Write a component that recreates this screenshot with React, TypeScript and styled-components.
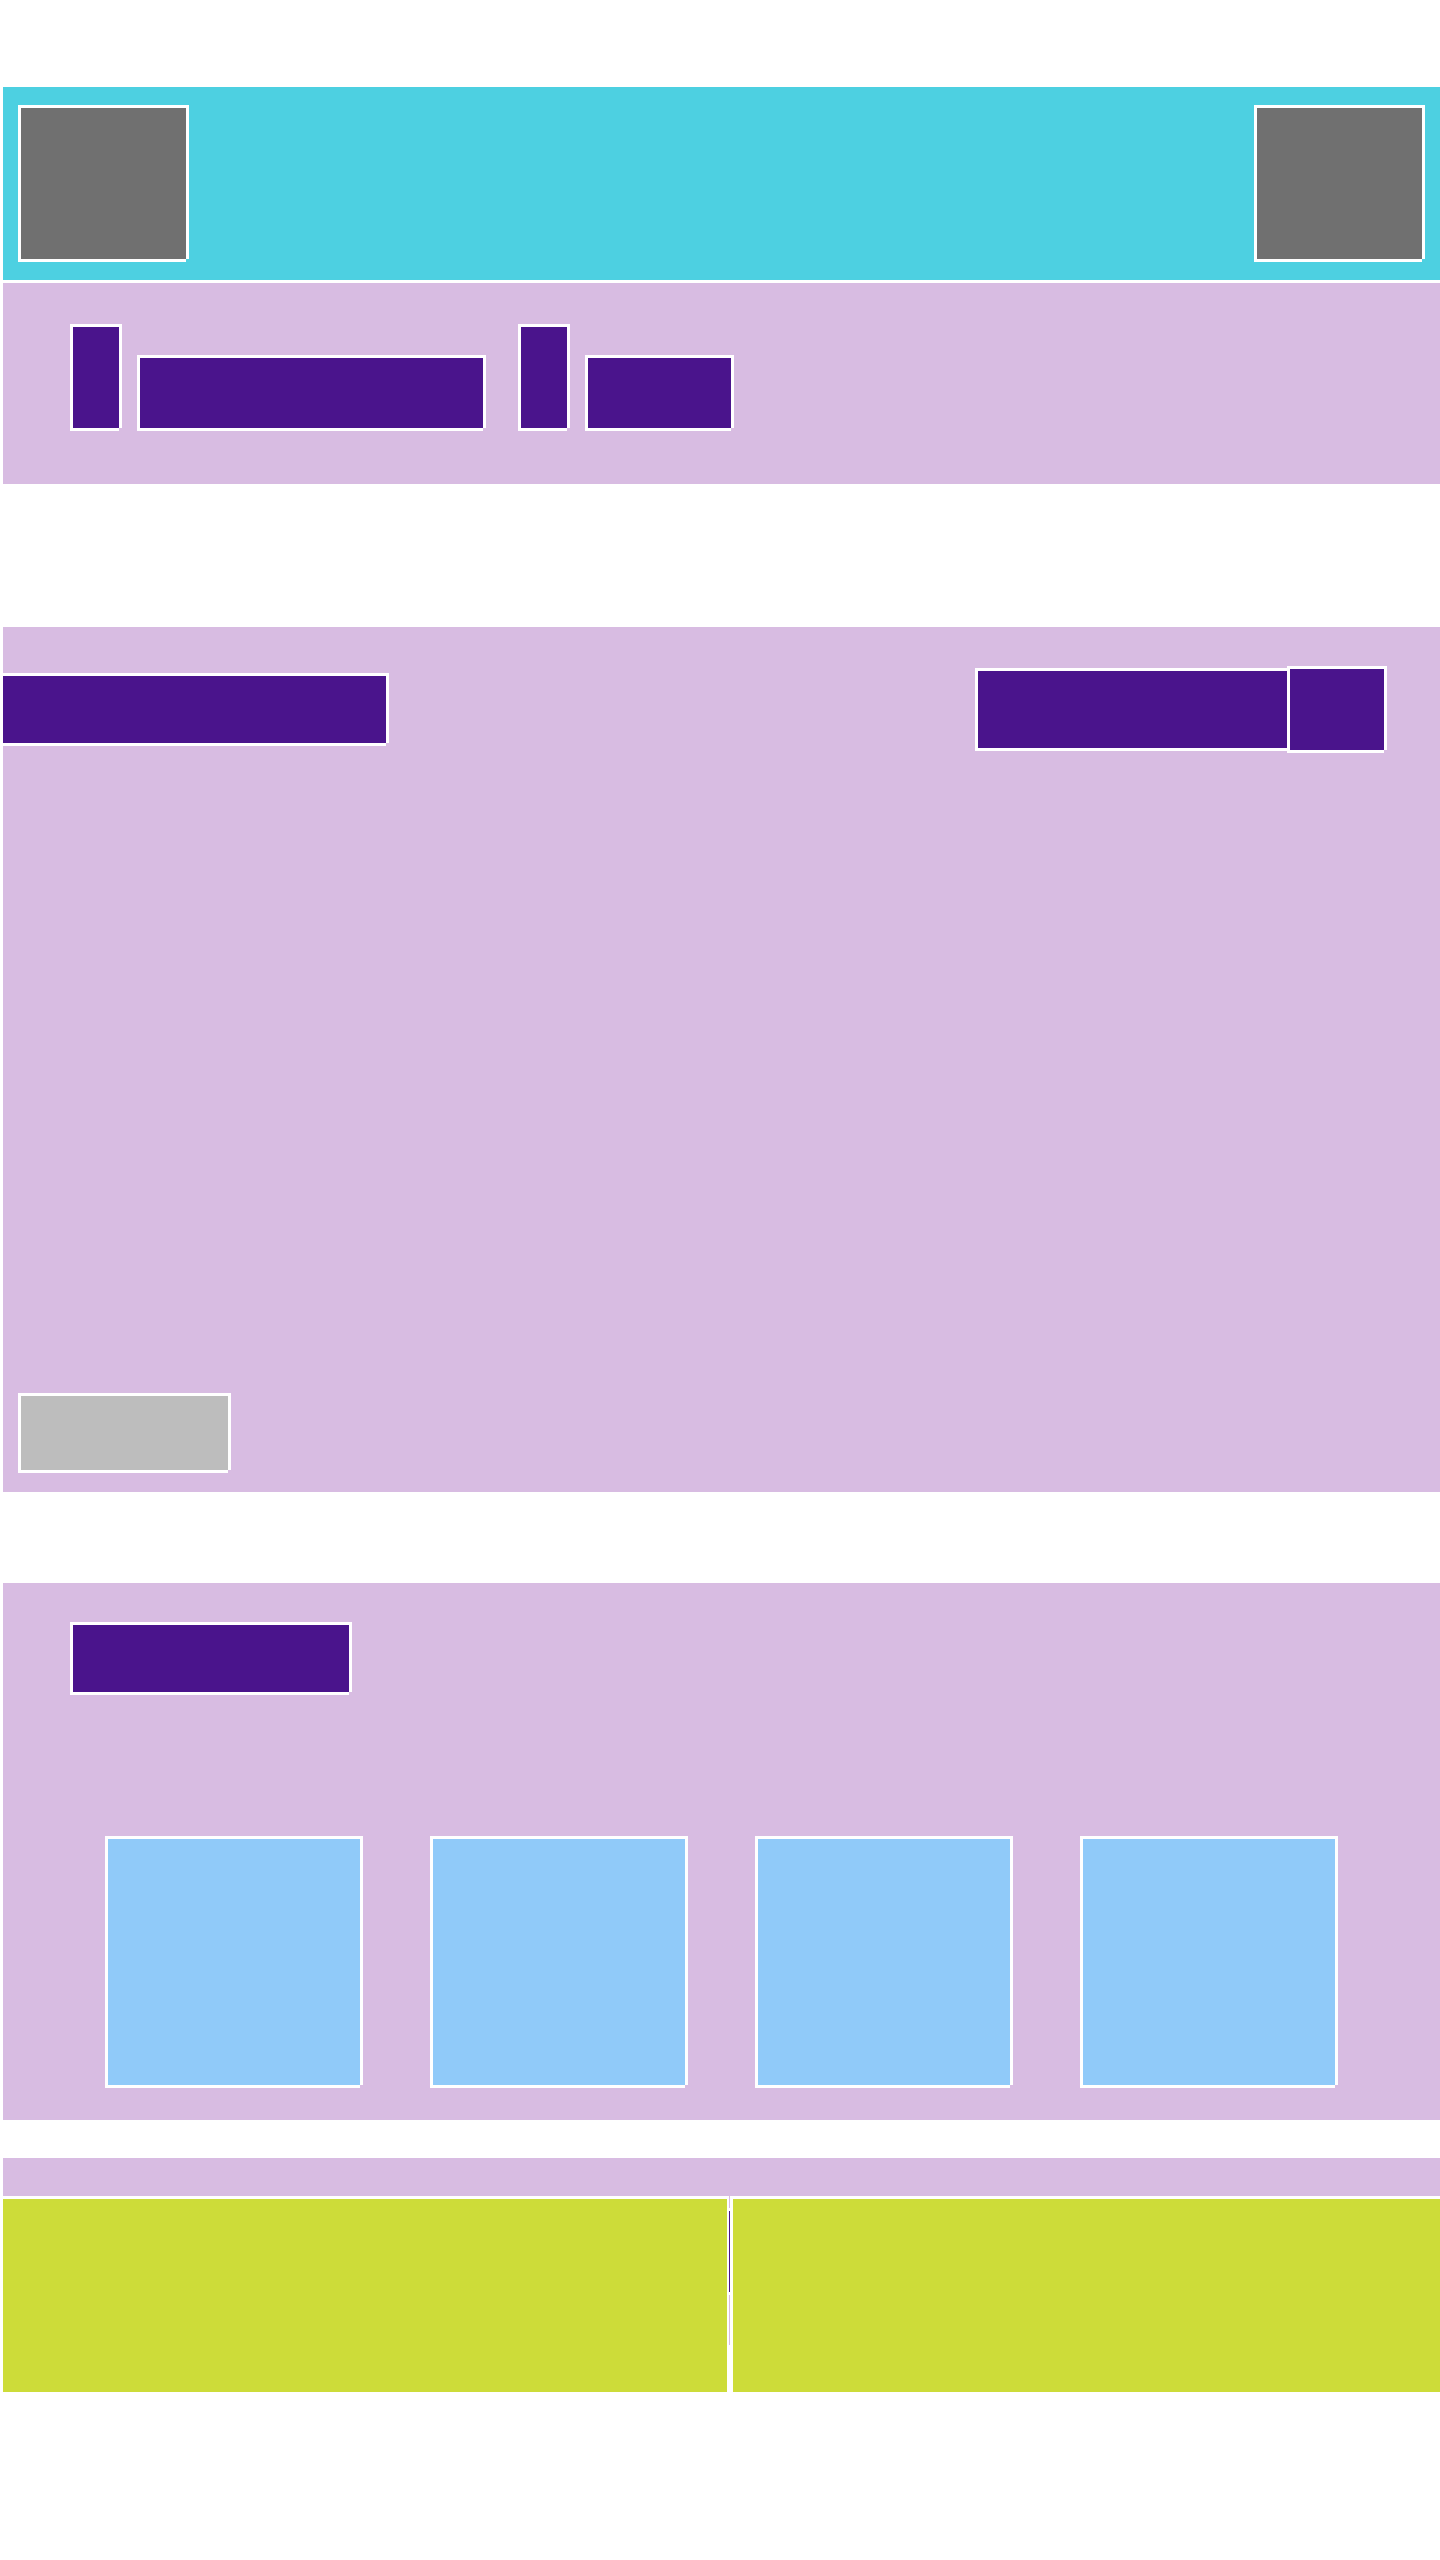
import styled, { createGlobalStyle, css } from "styled-components";

const colors = {
  white: "#ffffff",
  cyan: "#4dd0e1",
  lavender: "#d8bce2",
  purple: "#4a148c",
  gray: "#707070",
  lightGray: "#bdbdbd",
  sky: "#90caf9",
  lime: "#cddc39",
};

const GlobalStyle = createGlobalStyle`
  html, body {
    margin: 0;
    padding: 0;
    background: ${colors.white};
    font-family: "Liberation Sans", Arial, sans-serif;
  }
`;

// white frame on top/left, drawn as an offset shadow on right/bottom
const frame = css`
  box-sizing: border-box;
  border-top: 3px solid ${colors.white};
  border-left: 3px solid ${colors.white};
  box-shadow: 3px 0 0 ${colors.white}, 0 3px 0 ${colors.white};
`;

type BoxProps = { $w: number; $h: number };

const Page = styled.div`
  width: 1440px;
  padding-top: 84px;
  padding-bottom: 168px;
`;

const Header = styled.header`
  ${frame};
  width: 100%;
  background: ${colors.cyan};
  display: flex;
  justify-content: space-between;
  align-items: flex-start;
  padding: 18px 18px 21px 15px;
`;

const Logo = styled.div`
  ${frame};
  flex: none;
  width: 168px;
  height: 154px;
  background: ${colors.gray};
`;

const Nav = styled.nav`
  ${frame};
  width: 100%;
  background: ${colors.lavender};
  display: flex;
  align-items: flex-end;
  gap: 35px;
  padding: 41px 0 56px 67px;
`;

const NavGroup = styled.div`
  display: flex;
  align-items: flex-end;
  gap: 18px;
`;

const NavItem = styled.div<BoxProps>`
  ${frame};
  flex: none;
  width: ${(p) => p.$w}px;
  height: ${(p) => p.$h}px;
  background: ${colors.purple};
`;

const Main = styled.main`
  ${frame};
  width: 100%;
  height: 868px;
  margin-top: 140px;
  background: ${colors.lavender};
  display: flex;
  flex-direction: column;
  justify-content: space-between;
  padding: 39px 56px 22px 0;
`;

const TopRow = styled.div`
  display: flex;
  align-items: center;
  justify-content: space-between;
`;

const Title = styled.div<BoxProps & { $indent?: number }>`
  ${frame};
  flex: none;
  width: ${(p) => p.$w}px;
  height: ${(p) => p.$h}px;
  margin-left: ${(p) => p.$indent ?? 0}px;
  background: ${colors.purple};
`;

const Actions = styled.div`
  display: flex;
  align-items: center;
`;

const ActionButton = styled.div<BoxProps>`
  ${frame};
  flex: none;
  width: ${(p) => p.$w}px;
  height: ${(p) => p.$h}px;
  background: ${colors.purple};
`;

const GhostButton = styled.div`
  ${frame};
  width: 210px;
  height: 77px;
  margin-left: 15px;
  background: ${colors.lightGray};
`;

const Categories = styled.section`
  ${frame};
  width: 100%;
  margin-top: 88px;
  background: ${colors.lavender};
  padding: 39px 0 35px 67px;
`;

const CardRow = styled.div`
  display: flex;
  gap: 70px;
  margin-top: 144px;
  padding-left: 35px;
`;

const Card = styled.div`
  ${frame};
  flex: none;
  width: 255px;
  height: 249px;
  background: ${colors.sky};
`;

const Footer = styled.footer`
  margin-top: 35px;
`;

const FooterBar = styled.div`
  ${frame};
  width: 100%;
  height: 41px;
  background: ${colors.lavender};
`;

const Panels = styled.div`
  display: flex;
`;

const Panel = styled.div<{ $w?: number }>`
  ${frame};
  ${(p) => (p.$w ? `flex: none; width: ${p.$w}px;` : "flex: 1;")}
  height: 196px;
  background: ${colors.lime};
`;

const Divider = styled.div`
  flex: none;
  width: 3px;
  display: flex;
  flex-direction: column;
  align-items: flex-end;
  gap: 3px;
  position: relative;
  z-index: 1;
`;

const DividerLine = styled.div<{ $h: number; $dark?: boolean }>`
  width: 1px;
  height: ${(p) => p.$h}px;
  background: ${(p) => (p.$dark ? colors.purple : colors.lavender)};
`;

const cards = ["a", "b", "c", "d"];

export default function App() {
  return (
    <Page>
      <GlobalStyle />
      <Header>
        <Logo />
        <Logo />
      </Header>

      <Nav>
        <NavGroup>
          <NavItem $w={49} $h={104} />
          <NavItem $w={346} $h={73} />
        </NavGroup>
        <NavGroup>
          <NavItem $w={49} $h={104} />
          <NavItem $w={146} $h={73} />
        </NavGroup>
      </Nav>

      <Main>
        <TopRow>
          <Title $w={386} $h={70} $indent={-3} />
          <Actions>
            <ActionButton $w={312} $h={80} />
            <ActionButton $w={97} $h={84} />
          </Actions>
        </TopRow>
        <GhostButton />
      </Main>

      <Categories>
        <Title $w={279} $h={70} />
        <CardRow>
          {cards.map((c) => (
            <Card key={c} />
          ))}
        </CardRow>
      </Categories>

      <Footer>
        <FooterBar />
        <Panels>
          <Panel $w={727} />
          <Divider>
            <DividerLine $h={12} />
            <DividerLine $h={81} $dark />
            <DividerLine $h={50} />
          </Divider>
          <Panel />
        </Panels>
      </Footer>
    </Page>
  );
}
